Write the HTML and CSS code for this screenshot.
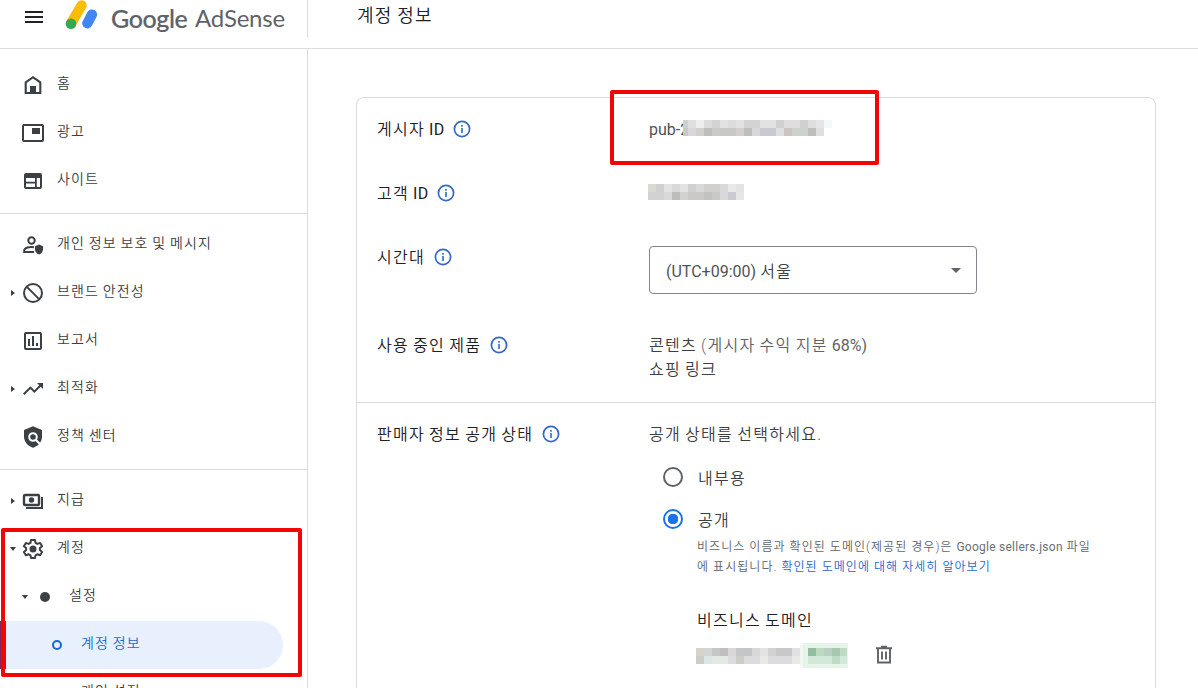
FILE: index.html
```
<!DOCTYPE html>
<html lang="ko">
<head>
	<meta charset="UTF-8">
	<title>Google AdSense - 계정 정보</title>
	<link rel="stylesheet" href="styles.css">
</head>
<body>
	<svg class="defs" width="0" height="0">
		<symbol id="info" viewBox="0 0 18 18">
			<circle cx="9" cy="9" r="7.6" fill="none" stroke="#3367c8" stroke-width="1.7"/>
			<path d="M8.2 8h1.6v5H8.2zM8.2 5h1.6v1.7H8.2z" fill="#3367c8"/>
		</symbol>
	</svg>

	<header class="header">
		<div class="brand">
			<svg class="menu" width="18" height="12" viewBox="0 0 18 12"><path d="M0 0h18v2H0zM0 5h18v2H0zM0 10h18v2H0z" fill="#202124"/></svg>
			<svg class="logo" width="34" height="30" viewBox="0 0 34 30">
				<path d="M16.5 5.5L6 23.5" stroke="#fbbc04" stroke-width="10.4" stroke-linecap="round"/>
				<path d="M27 14.5L22.3 23.3" stroke="#4285f4" stroke-width="10.2" stroke-linecap="round"/>
				<circle cx="6" cy="23.8" r="5.3" fill="#34a853"/>
			</svg>
			<span class="brand-google">Google</span>
			<span class="brand-product">AdSense</span>
		</div>
		<h1 class="page-title">계정 정보</h1>
	</header>

	<div class="layout">
		<nav class="sidebar">
			<a class="item">
				<svg class="icon" viewBox="0 0 24 24"><path d="M4.7 9.3L12 4.2l7.3 5.1V20H4.7z" fill="none" stroke="#3c4043" stroke-width="2.1"/><path d="M9 13h6v7H9z" fill="#3c4043"/></svg>
				<span>홈</span>
			</a>
			<a class="item">
				<svg class="icon" viewBox="0 0 24 24"><rect x="2" y="4" width="20" height="16" rx="1" fill="none" stroke="#3c4043" stroke-width="2"/><path d="M11 7h8v6h-8z" fill="#3c4043"/></svg>
				<span>광고</span>
			</a>
			<a class="item">
				<svg class="icon" viewBox="0 0 24 24"><path fill="#3c4043" fill-rule="evenodd" d="M5 4h14a2 2 0 0 1 2 2v12a2 2 0 0 1-2 2H5a2 2 0 0 1-2-2V6a2 2 0 0 1 2-2zM5 9v3.8h9V9zM5 14.4V18h9v-3.6zM15.8 9v9H19V9z"/></svg>
				<span>사이트</span>
			</a>
			<div class="divider"></div>
			<a class="item">
				<svg class="icon" viewBox="0 0 24 24"><circle cx="10.5" cy="7.5" r="3.2" fill="none" stroke="#3c4043" stroke-width="2"/><path d="M13 14.3c-4.5-1-9.8.6-9.8 3.3V19H13" fill="none" stroke="#3c4043" stroke-width="2"/><path d="M18 11.5l4 1.7v3c0 2.5-1.7 4.500-4 5.300-2.300-.8-4-2.800-4-5.300v-3z" fill="#3c4043"/></svg>
				<span>개인 정보 보호 및 메시지</span>
			</a>
			<a class="item">
				<i class="arrow"></i>
				<svg class="icon" viewBox="0 0 24 24"><circle cx="12" cy="12" r="9" fill="none" stroke="#3c4043" stroke-width="2"/><path d="M5.6 5.6l12.8 12.8" stroke="#3c4043" stroke-width="2"/></svg>
				<span>브랜드 안전성</span>
			</a>
			<a class="item">
				<svg class="icon" viewBox="0 0 24 24"><rect x="4" y="4" width="16" height="16" rx="1" fill="none" stroke="#3c4043" stroke-width="2"/><path d="M7 10h2v7H7zM11 7h2v10h-2zM15 14h2v3h-2z" fill="#3c4043"/></svg>
				<span>보고서</span>
			</a>
			<a class="item">
				<i class="arrow"></i>
				<svg class="icon" viewBox="0 0 24 24"><path fill="#3c4043" d="M16 6l2.290 2.290-4.880 4.880-4-4L2 16.590 3.410 18l6-6 4 4 6.300-6.290L22 12V6z"/></svg>
				<span>최적화</span>
			</a>
			<a class="item">
				<svg class="icon" viewBox="0 0 24 24"><path fill="#3c4043" d="M12 1.300L21 5v6.500c0 5.200-3.800 9.800-9 11.200-5.200-1.400-9-6-9-11.200V5z"/><circle cx="12" cy="12" r="3.800" fill="none" stroke="#fff" stroke-width="2"/><path d="M14.700 14.700l5 5" stroke="#fff" stroke-width="2"/></svg>
				<span>정책 센터</span>
			</a>
			<div class="divider"></div>
			<a class="item">
				<i class="arrow"></i>
				<svg class="icon" viewBox="0 0 24 24"><rect x="3" y="6" width="15" height="10" rx="1" fill="none" stroke="#3c4043" stroke-width="2.400"/><circle cx="10.500" cy="11" r="2.700" fill="#3c4043"/><path d="M3 5h3L3 8zM18 5v3l-3-3zM3 17v-3l3 3zM18 17h-3l3-3z" fill="#3c4043"/><path d="M5 19h16V8" fill="none" stroke="#3c4043" stroke-width="2"/></svg>
				<span>지급</span>
			</a>
			<a class="item">
				<i class="arrow open"></i>
				<svg class="icon" viewBox="0 0 24 24"><path d="M10 3h4l.5 2.800 1.900 1.100 2.700-1 2 3.400-2.200 1.800v2l2.200 1.800-2 3.400-2.700-1-1.900 1.100L14 21h-4l-.5-2.600-1.900-1.100-2.700 1-2-3.400 2.200-1.800v-2L2.900 9.300l2-3.400 2.700 1 1.900-1.100z" fill="none" stroke="#3c4043" stroke-width="2" stroke-linejoin="round"/><circle cx="12" cy="12" r="3.500" fill="#3c4043"/></svg>
				<span>계정</span>
			</a>
			<a class="item sub">
				<i class="arrow open"></i>
				<i class="dot"></i>
				<span>설정</span>
			</a>
			<a class="item leaf active">
				<i class="ring"></i>
				<span>계정 정보</span>
			</a>
			<a class="item leaf">
				<span>개인 설정</span>
			</a>
			<div class="mark mark-nav"></div>
		</nav>

		<main class="content">
			<div class="card">
				<section class="rows">
					<div class="row">
						<div class="label">게시자 <b>ID</b><svg class="info"><use href="#info"/></svg></div>
						<div class="value publisher"><span class="latin">pub-2</span>
							<svg class="mosaic" width="149" height="16" viewBox="683 0 149 16" shape-rendering="crispEdges">
								<path fill="#d0d0d0" d="M683 0h5v8h-5z"/><path fill="#dfdfdf" d="M688 0h8v8h-8z"/><path fill="#eee" d="M696 0h8v8h-8z"/><path fill="#dcdcdc" d="M704 0h8v8h-8zM728 0h8v8h-8z"/><path fill="#d3d3d1" d="M712 0h8v8h-8zM744 0h16v8h-16z"/><path fill="#e2e2e2" d="M720 0h8v8h-8zM736 0h8v8h-8zM760 0h16v8h-16z"/><path fill="#d0d0ce" d="M776 0h8v8h-8zM800 0h8v8h-8z"/><path fill="#dfdddd" d="M784 0h16v8h-16zM808 0h8v8h-8z"/><path fill="#e5e5e7" d="M816 0h8v8h-8z"/><path fill="#f4f8fb" d="M824 0h8v8h-8z"/>
								<path fill="#c8c8c6" d="M683 8h5v8h-5zM720 8h16v8h-16z"/><path fill="#d8d8da" d="M688 8h8v8h-8zM752 8h8v8h-8z"/><path fill="#d3cfce" d="M696 8h8v8h-8zM736 8h8v8h-8z"/><path fill="#bebebd" d="M704 8h8v8h-8zM744 8h8v8h-8zM808 8h8v8h-8z"/><path fill="#cacac9" d="M712 8h8v8h-8z"/><path fill="#c9c9d0" d="M760 8h16v8h-16z"/><path fill="#dedfe1" d="M776 8h8v8h-8zM816 8h8v8h-8z"/><path fill="#cdc3c1" d="M784 8h8v8h-8z"/><path fill="#ccd2ce" d="M792 8h16v8h-16z"/>
							</svg>
							<div class="mark mark-id"></div>
						</div>
					</div>
					<div class="row">
						<div class="label">고객 <b>ID</b><svg class="info"><use href="#info"/></svg></div>
						<div class="value customer">
							<svg class="mosaic" width="96" height="16" viewBox="648 0 96 16" shape-rendering="crispEdges">
								<path fill="#d9dad2" d="M648 0h8v8h-8z"/><path fill="#d1d0cf" d="M656 0h8v8h-8zM688 0h8v8h-8zM704 0h16v8h-16z"/><path fill="#e3e3e3" d="M664 0h8v8h-8zM680 0h8v8h-8zM736 0h8v8h-8z"/><path fill="#d9d9d9" d="M672 0h8v8h-8zM696 0h8v8h-8zM720 0h8v8h-8z"/><path fill="#e9e9ea" d="M728 0h8v8h-8z"/>
								<path fill="#d2d2d2" d="M648 8h16v8h-16zM680 8h8v8h-8z"/><path fill="#d9d9dc" d="M664 8h8v8h-8zM720 8h8v8h-8z"/><path fill="#bebdb9" d="M672 8h8v8h-8z"/><path fill="#cbc9c7" d="M688 8h16v8h-16zM712 8h8v8h-8z"/><path fill="#c2c2be" d="M704 8h8v8h-8z"/><path fill="#cacad2" d="M728 8h8v8h-8z"/><path fill="#e6e6e6" d="M736 8h8v8h-8z"/>
							</svg>
						</div>
					</div>
					<div class="row timezone">
						<div class="label">시간대<svg class="info"><use href="#info"/></svg></div>
						<div class="select"><span><span class="latin">(UTC+09:00)</span> 서울</span><i class="caret"></i></div>
					</div>
					<div class="row products">
						<div class="label">사용 중인 제품<svg class="info"><use href="#info"/></svg></div>
						<div class="value">콘텐츠 <span class="muted">(게시자 수익 지분 <span class="latin">68%)</span></span><br>쇼핑 링크</div>
					</div>
				</section>
				<section class="rows seller">
					<div class="row">
						<div class="label">판매자 정보 공개 상태<svg class="info"><use href="#info"/></svg></div>
						<div class="value">
							<div class="prompt">공개 상태를 선택하세요.</div>
							<div class="option"><i class="radio"></i><span>내부용</span></div>
							<div class="option"><i class="radio checked"></i><span>공개</span></div>
							<div class="details">
								<p class="hint">비즈니스 이름과 확인된 도메인(제공된 경우)은 <span class="latin">Google sellers.json</span> 파일<br>에 표시됩니다. <a>확인된 도메인에 대해 자세히 알아보기</a></p>
								<div class="domain-title">비즈니스 도메인</div>
								<div class="domain">
									<svg width="152" height="26" viewBox="696 643 152 26" shape-rendering="crispEdges">
										<path fill="#d8d3ca" d="M696 648h8v8h-8z"/><path fill="#d1d5d4" d="M704 648h8v8h-8z"/><path fill="#c4c7c8" d="M712 648h8v8h-8zM736 648h8v8h-8z"/><path fill="#c2bebe" d="M720 648h8v8h-8z"/><path fill="#d8d8d8" d="M728 648h8v8h-8zM752 648h8v8h-8z"/><path fill="#c3c6c8" d="M744 648h8v8h-8z"/><path fill="#e3e4e1" d="M760 648h8v8h-8z"/><path fill="#d3d2d3" d="M768 648h8v8h-8z"/><path fill="#c8c8ca" d="M776 648h16v8h-16z"/><path fill="#e0e1e2" d="M792 648h8v8h-8z"/>
										<path fill="#cbcdc7" d="M696 656h8v8h-8zM736 656h8v8h-8z"/><path fill="#dce6e4" d="M704 656h8v8h-8z"/><path fill="#e4e9e6" d="M712 656h16v8h-16z"/><path fill="#dcdcde" d="M728 656h8v8h-8zM744 656h16v8h-16zM768 656h24v8h-24z"/><path fill="#e9e9e8" d="M760 656h8v8h-8zM792 656h8v8h-8z"/>
										<path fill="#e6f4ea" d="M803 643h45v25h-45z"/><path fill="#f1f8f3" d="M800 643h3v25h-3z"/>
										<path fill="#91bda1" d="M808 648h8v8h-8z"/><path fill="#bbdac0" d="M816 648h8v8h-8z"/><path fill="#b7d0c1" d="M824 648h8v8h-8z"/><path fill="#a7c8af" d="M832 648h8v8h-8z"/><path fill="#bedbc6" d="M840 648h7v8h-7zM832 656h8v8h-8z"/><path fill="#d2e9da" d="M808 656h24v8h-24zM840 656h7v8h-7z"/>
									</svg>
									<svg class="trash" width="18" height="20" viewBox="0 0 18 20"><path d="M1 3.300h16M6 1.800h6M3 4v13.500h12V4M7 6.500v8M11 6.500v8" fill="none" stroke="#5f6368" stroke-width="1.900"/></svg>
								</div>
							</div>
						</div>
					</div>
				</section>
			</div>
		</main>
	</div>
</body>
</html>
```
FILE: styles.css
```
* {
	box-sizing: border-box;
}
body {
	margin: 0;
	height: 688px;
	overflow: hidden;
	background-color: #fff;
	color: #3c4043;
	font-family: Roboto, "Noto Sans CJK KR", sans-serif;
	font-size: 16px;
	font-weight: 350;
	letter-spacing: 1.28px;
	word-spacing: -1.1px;
}
.defs {
	display: none;
}
.latin {
	font-weight: 400;
	letter-spacing: 0;
	color: #505357;
}

/* header */
.header {
	display: flex;
	height: 49px;
	border-bottom: 1px solid #dadce0;
}
.brand {
	display: flex;
	width: 308px;
	height: 37px;
	border-right: 1px solid #dadce0;
	color: #5f6368;
	font-family: Lato, sans-serif;
	font-size: 25px;
	line-height: 36px;
	letter-spacing: -0.4px;
}
.menu {
	margin: 11px 0 0 25px;
}
.logo {
	margin: 0 12px 0 22px;
}
.brand-google {
	width: 84px;
	font-weight: 500;
	-webkit-text-stroke: 0.2px #5f6368;
}
.brand-product {
	font-weight: 400;
	font-size: 24px;
	letter-spacing: -0.2px;
}
.page-title {
	margin: 0 0 0 49px;
	color: #202124;
	font-size: 18px;
	font-weight: 350;
	line-height: 32px;
}

/* sidebar */
.layout {
	display: flex;
	height: 639px;
}
.sidebar {
	position: relative;
	flex: none;
	width: 308px;
	padding-top: 12px;
	border-right: 1px solid #dadce0;
	font-size: 14px;
	letter-spacing: 1.1px;
	word-spacing: -0.7px;
	overflow: hidden;
}
.item {
	display: flex;
	align-items: center;
	height: 48px;
	padding-left: 10px;
}
.item span {
	padding-bottom: 6px;
}
.icon {
	width: 24px;
	height: 24px;
	margin-right: 12px;
	margin-left: 11px;
}
.arrow {
	width: 0;
	height: 0;
	margin: 0 -5px 0 1px;
	border: 3.5px solid transparent;
	border-right: 0;
	border-left: 4px solid #3c4043;
}
.arrow.open {
	margin: 0 -6px 0 0;
	border: 3px solid transparent;
	border-top: 4px solid #3c4043;
	border-bottom: 0;
}
.divider {
	margin: 8px 0 7px;
	border-top: 1px solid #dadce0;
}
.sub {
	padding-left: 22px;
}
.sub .arrow.open {
	margin-right: 12px;
}
.dot {
	width: 10px;
	height: 10px;
	margin-right: 19px;
	border-radius: 50%;
	background-color: #3c4043;
}
.leaf {
	width: 283px;
	padding-left: 81px;
}
.active {
	padding-left: 52px;
	border-radius: 0 24px 24px 0;
	background-color: #e8f0fe;
	color: #1967d2;
	box-shadow: inset 6px 0 #8b2456;
}
.ring {
	width: 10px;
	height: 10px;
	margin-right: 19px;
	border: 2px solid #1967d2;
	border-radius: 50%;
}

/* highlight frames */
.mark {
	position: absolute;
	border: 4px solid #f20505;
	border-radius: 2px;
}
.mark-nav {
	top: 479px;
	left: 1px;
	width: 301px;
	height: 149px;
}
.mark-id {
	top: -28px;
	left: -39px;
	width: 269px;
	height: 75px;
}

/* card */
.content {
	height: 639px;
	padding: 48px 0 0 48px;
	overflow: hidden;
}
.card {
	width: 800px;
	height: 591px;
	border: 1px solid #dadce0;
	border-bottom: 0;
	border-radius: 8px 8px 0 0;
}
.rows {
	height: 304px;
	padding: 20px;
	line-height: 24px;
}
.row {
	display: flex;
	height: 64px;
}
.label {
	display: flex;
	flex: none;
	width: 272px;
	height: 24px;
	color: #202124;
	white-space: pre;
}
.label b {
	font-weight: 400;
	letter-spacing: 0.2px;
}
.info {
	width: 18px;
	height: 18px;
	margin: 2px 0 0 9px;
}
.publisher {
	position: relative;
	display: flex;
}
.publisher .mosaic {
	margin: 2px 0 0 -6px;
}
.customer .mosaic {
	display: block;
	margin: 2px 0 0 -1px;
}
.timezone {
	height: 88px;
}
.select {
	display: flex;
	align-items: center;
	justify-content: space-between;
	width: 328px;
	height: 48px;
	padding: 0 15px 0 16px;
	border: 1px solid #80868b;
	border-radius: 4px;
}
.select > span {
	padding-top: 3px;
}
.caret {
	border: 5px solid transparent;
	border-top-color: #5f6368;
	border-bottom: 0;
}
.muted,
.muted .latin {
	color: #5f6368;
}
.seller {
	height: auto;
	border-top: 1px solid #dadce0;
}
.prompt {
	height: 33px;
}
.option {
	display: flex;
	align-items: center;
	height: 42px;
	padding-left: 14px;
}
.option span {
	padding-top: 3px;
}
.radio {
	width: 20px;
	height: 20px;
	margin-right: 15px;
	border: 2px solid #5f6368;
	border-radius: 50%;
}
.radio.checked {
	border-color: #1a73e8;
	background: radial-gradient(circle, #1a73e8 5px, transparent 5.5px);
}
.details {
	padding-left: 48px;
}
.hint {
	margin: -3px 0 0;
	color: #5f6368;
	font-size: 12px;
	line-height: 20px;
	letter-spacing: 1.05px;
	word-spacing: 0;
	white-space: nowrap;
}
.hint .latin {
	color: #6b6f73;
	letter-spacing: 0.25px;
}
.hint a {
	color: #1967d2;
}
.domain-title {
	margin-top: 32px;
	color: #202124;
}
.domain {
	display: flex;
	margin: 10px 0 0 -1px;
}
.trash {
	margin: 2px 0 0 27px;
}
```
